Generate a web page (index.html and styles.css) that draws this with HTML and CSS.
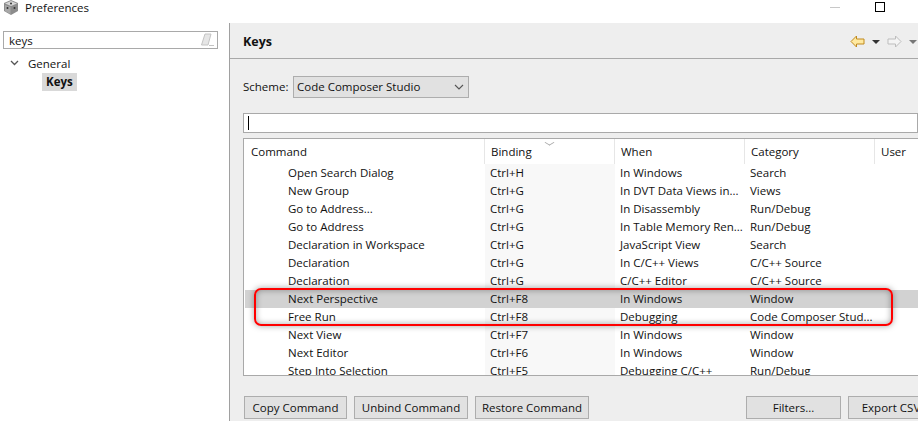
FILE: index.html
```html
<!DOCTYPE html>
<html lang="en">
<head>
    <meta charset="UTF-8">
    <title>Preferences</title>
    <link rel="stylesheet" href="styles.css">
</head>
<body>
    <header class="titlebar">
        <div class="title-left">
            <svg class="app-icon" width="16" height="16" viewBox="0 0 16 16">
                <path d="M8 0 15 3 15 11 8 15 1 11 1 3Z" fill="#8c8c8c"/>
                <path d="M8 1 14 3.500 8 6 2 3.500Z" fill="#d6d6d6"/>
                <path d="M2 5 7.500 7 7.500 14 2 11Z" fill="#a8a8a8"/>
                <circle cx="8" cy="3.500" r="1" fill="#333"/>
                <circle cx="4.500" cy="8" r="1" fill="#333"/>
                <circle cx="11.500" cy="8" r="1" fill="#333"/>
            </svg>
            <span>Preferences</span>
        </div>
        <div class="window-buttons">
            <span class="win-min"></span>
            <span class="win-max"></span>
        </div>
    </header>

    <div class="main">
        <aside class="left-pane">
            <div class="search-box">
                <span>keys</span>
                <svg width="14" height="14" viewBox="0 0 14 14">
                    <path d="M5 1H11L8 12H1.500Z" fill="#e6e6e6" stroke="#c4c4c4"/>
                    <path d="M9 12.500H14" stroke="#c4c4c4"/>
                </svg>
            </div>
            <ul class="tree">
                <li class="tree-parent">
                    <svg width="9" height="6" viewBox="0 0 9 6"><path d="M1 1 4.500 4.500 8 1" fill="none" stroke="#555" stroke-width="1.300"/></svg>
                    <span>General</span>
                </li>
                <li class="tree-child"><span class="tree-selected">Keys</span></li>
            </ul>
        </aside>

        <section class="right-pane">
            <div class="page-head">
                <h1>Keys</h1>
                <div class="nav-arrows">
                    <svg width="15" height="13" viewBox="0 0 15 13"><path d="M1 6.500 6.500 1V4H14V9H6.500V12Z" fill="#ffe9a0" stroke="#c08a1e"/></svg>
                    <span class="drop drop-dark"></span>
                    <svg width="15" height="13" viewBox="0 0 15 13"><path d="M14 6.500 8.500 1V4H1V9H8.500V12Z" fill="#f4f4f4" stroke="#bdbdbd"/></svg>
                    <span class="drop"></span>
                </div>
            </div>

            <div class="page-body">
                <div class="scheme-row">
                    <label>Scheme:</label>
                    <div class="scheme-select">
                        <span>Code Composer Studio</span>
                        <svg width="10" height="6" viewBox="0 0 10 6"><path d="M1 1 5 5 9 1" fill="none" stroke="#555" stroke-width="1.100"/></svg>
                    </div>
                </div>

                <div class="filter-input"><span class="caret"></span></div>

                <div class="table-wrap">
                    <table class="keys-table">
                        <colgroup>
                            <col class="col-command">
                            <col class="col-mid">
                            <col class="col-mid">
                            <col class="col-mid">
                            <col class="col-user">
                        </colgroup>
                        <thead>
                            <tr>
                                <th>Command</th>
                                <th class="sorted">Binding</th>
                                <th>When</th>
                                <th>Category</th>
                                <th>User</th>
                            </tr>
                        </thead>
                        <tbody>
                            <tr><td>Open Search Dialog</td><td>Ctrl+H</td><td>In Windows</td><td>Search</td><td></td></tr>
                            <tr><td>New Group</td><td>Ctrl+G</td><td>In DVT Data Views in...</td><td>Views</td><td></td></tr>
                            <tr><td>Go to Address...</td><td>Ctrl+G</td><td>In Disassembly</td><td>Run/Debug</td><td></td></tr>
                            <tr><td>Go to Address</td><td>Ctrl+G</td><td>In Table Memory Ren...</td><td>Run/Debug</td><td></td></tr>
                            <tr><td>Declaration in Workspace</td><td>Ctrl+G</td><td>JavaScript View</td><td>Search</td><td></td></tr>
                            <tr><td>Declaration</td><td>Ctrl+G</td><td>In C/C++ Views</td><td>C/C++ Source</td><td></td></tr>
                            <tr><td>Declaration</td><td>Ctrl+G</td><td>C/C++ Editor</td><td>C/C++ Source</td><td></td></tr>
                            <tr class="selected"><td>Next Perspective</td><td>Ctrl+F8</td><td>In Windows</td><td>Window</td><td></td></tr>
                            <tr><td>Free Run</td><td>Ctrl+F8</td><td>Debugging</td><td>Code Composer Stud...</td><td></td></tr>
                            <tr><td>Next View</td><td>Ctrl+F7</td><td>In Windows</td><td>Window</td><td></td></tr>
                            <tr><td>Next Editor</td><td>Ctrl+F6</td><td>In Windows</td><td>Window</td><td></td></tr>
                            <tr><td>Step Into Selection</td><td>Ctrl+F5</td><td>Debugging C/C++</td><td>Run/Debug</td><td></td></tr>
                        </tbody>
                    </table>
                    <div class="red-mark"></div>
                </div>

                <div class="button-row">
                    <button class="btn btn-copy">Copy Command</button>
                    <button class="btn btn-unbind">Unbind Command</button>
                    <button class="btn btn-restore">Restore Command</button>
                    <button class="btn btn-filters">Filters...</button>
                    <button class="btn btn-export">Export CSV...</button>
                </div>
            </div>
        </section>
    </div>
</body>
</html>
```

FILE: styles.css
```css
* {
    box-sizing: border-box;
}

html, body {
    margin: 0;
    height: 421px;
    overflow: hidden;
}

body {
    width: 918px;
    font-family: "Open Sans", "Noto Sans", sans-serif;
    font-size: 11.5px;
    color: #111;
    background: #fff;
}

.titlebar {
    height: 23px;
    display: flex;
    justify-content: space-between;
    background: #fff;
}

.title-left {
    display: flex;
    align-items: center;
    height: 15px;
    padding-left: 3px;
    gap: 6px;
}

.window-buttons {
    display: flex;
    align-items: flex-start;
    padding-right: 33px;
}

.win-min {
    width: 10px;
    height: 1px;
    margin-top: 7px;
    margin-right: 35px;
    background: #c8c8c8;
}

.win-max {
    width: 10px;
    height: 10px;
    margin-top: 2px;
    border: 1px solid #000;
}

.main {
    display: flex;
    height: 398px;
}

.left-pane {
    width: 230px;
    padding: 8px 11px 0 3px;
    border-right: 1px solid #a0a0a0;
    background: #fff;
}

.search-box {
    display: flex;
    align-items: center;
    justify-content: space-between;
    height: 18px;
    padding: 0 3px 0 5px;
    border: 1px solid #a9a9a9;
}

.tree {
    list-style: none;
    margin: 5px 0 0;
    padding: 0;
}

.tree li {
    display: flex;
    align-items: center;
    height: 18px;
}

.tree-parent svg {
    margin: 0 9px 0 7px;
}

.tree-child {
    margin-top: 1px;
    padding-left: 39px;
}

.tree-selected {
    padding: 0 4px;
    line-height: 18px;
    font-weight: bold;
    background: #d9d9d9;
}

.right-pane {
    flex: 1;
    min-width: 0;
    background: #eee;
}

.page-head {
    display: flex;
    align-items: center;
    justify-content: space-between;
    height: 36px;
    padding: 2px 0 0 13px;
    border-bottom: 1px solid #a8a8a8;
}

h1 {
    margin: 0;
    font-size: 12.5px;
    font-weight: bold;
}

.nav-arrows {
    display: flex;
    align-items: center;
    gap: 7px;
    padding-right: 1px;
}

.drop {
    width: 0;
    height: 0;
    border-left: 4px solid transparent;
    border-right: 4px solid transparent;
    border-top: 4px solid #777;
}

.drop-dark {
    border-top-color: #333;
}

.page-body {
    padding: 17px 0 0 13px;
}

.scheme-row {
    display: flex;
    align-items: center;
}

.scheme-row label {
    width: 50px;
    padding-bottom: 1px;
}

.scheme-select {
    display: flex;
    align-items: center;
    justify-content: space-between;
    width: 176px;
    height: 22px;
    padding: 0 4px 1px 3px;
    border: 1px solid #adadad;
    background: #e1e1e1;
}

.filter-input {
    display: flex;
    align-items: center;
    height: 20px;
    margin-top: 15px;
    padding-left: 4px;
    border: 1px solid #a9a9a9;
    background: #fff;
}

.caret {
    width: 1px;
    height: 14px;
    background: #000;
}

.table-wrap {
    position: relative;
    height: 238px;
    margin-top: 5px;
    padding-left: 1px;
    overflow: hidden;
    border: 1px solid #a9a9a9;
    border-right: none;
    background: #fff;
}

.keys-table {
    width: 673px;
    table-layout: fixed;
    border-collapse: separate;
    border-spacing: 0;
}

.col-command {
    width: 240px;
}

.col-mid {
    width: 130px;
}

.keys-table th {
    height: 25px;
    padding: 0 0 1px 6px;
    font-weight: normal;
    text-align: left;
    white-space: nowrap;
    background: #fff;
    border-right: 1px solid #e6e6e6;
}

.keys-table th:last-child {
    border-right: none;
}

.keys-table td {
    height: 18px;
    padding: 0 0 2px 5px;
    white-space: nowrap;
    overflow: hidden;
}

.keys-table td:first-child {
    padding-left: 43px;
}

.keys-table td:nth-child(2) {
    background: #f8f8f8;
}

.keys-table .selected td {
    background: #d2d2d2;
}

.sorted {
    position: relative;
}

.sorted::after {
    content: "";
    position: absolute;
    left: 61px;
    top: 0;
    width: 6px;
    height: 6px;
    border-right: 1px solid #a8a8a8;
    border-bottom: 1px solid #a8a8a8;
    transform: scaleY(0.6) rotate(45deg);
}

.red-mark {
    position: absolute;
    left: 10px;
    top: 149px;
    width: 639px;
    height: 38px;
    border: 2px solid #f00;
    border-radius: 7px;
    box-shadow: 0 0 6px rgba(0, 0, 0, 0.35), inset 0 0 6px rgba(0, 0, 0, 0.35);
}

.button-row {
    display: flex;
    margin-top: 20px;
    padding-left: 1px;
}

.btn {
    flex: none;
    height: 23px;
    padding: 0 0 1px;
    font: inherit;
    color: #111;
    border: 1px solid #adadad;
    background: #e1e1e1;
}

.btn-copy {
    width: 103px;
}

.btn-unbind {
    width: 114px;
    margin-left: 7px;
}

.btn-restore {
    width: 114px;
    margin-left: 7px;
}

.btn-filters {
    width: 95px;
    margin-left: 157px;
}

.btn-export {
    width: 95px;
    margin-left: 7px;
}
```
